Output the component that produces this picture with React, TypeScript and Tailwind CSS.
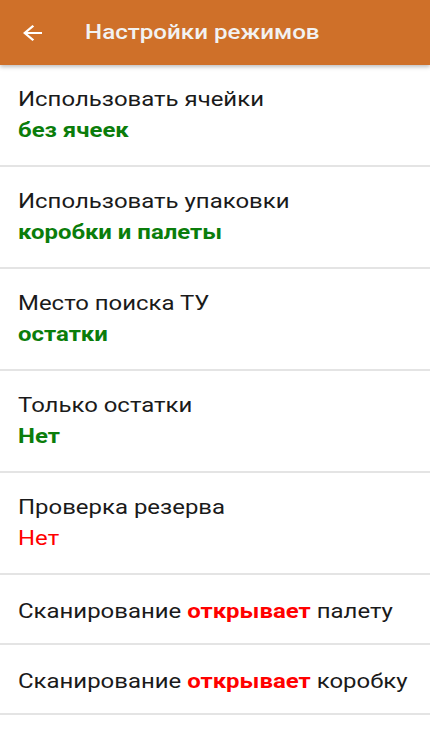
type Row =
  | { kind: "pair"; label: string; value: string; tone: "green" | "red"; bold: boolean }
  | { kind: "scan"; target: string };

const rows: Row[] = [
  { kind: "pair", label: "Использовать ячейки", value: "без ячеек", tone: "green", bold: true },
  { kind: "pair", label: "Использовать упаковки", value: "коробки и палеты", tone: "green", bold: true },
  { kind: "pair", label: "Место поиска ТУ", value: "остатки", tone: "green", bold: true },
  { kind: "pair", label: "Только остатки", value: "Нет", tone: "green", bold: true },
  { kind: "pair", label: "Проверка резерва", value: "Нет", tone: "red", bold: false },
  { kind: "scan", target: "палету" },
  { kind: "scan", target: "коробку" }
];

// the screenshot's glyphs are a bit wider than Roboto, so text is stretched on x
const wide = "inline-block origin-left scale-x-[1.14] whitespace-nowrap";

export default function App() {
  return (
    <div className="min-h-screen bg-white font-['Roboto',sans-serif] text-[#1a1a1a]">
      <header className="relative z-10 flex h-[65px] items-center bg-[#cf7029] shadow-[0_2px_4px_rgba(0,0,0,0.25)]">
        <button className="flex h-[65px] w-[64px] items-center justify-center text-white" aria-label="Назад">
          <svg viewBox="4 4 16 16" preserveAspectRatio="none" className="h-[16px] w-[19px]" fill="currentColor">
            <path d="M20 11H7.83l5.59-5.59L12 4l-8 8 8 8 1.41-1.41L7.83 13H20v-2z" />
          </svg>
        </button>
        <h1 className="ml-[21px] text-[21px] font-medium text-[#f2f2f2]">
          <span className="inline-block origin-left scale-x-[1.15] whitespace-nowrap">Настройки режимов</span>
        </h1>
      </header>
      <main>
        {rows.map((row, i) => (
          <div key={i} className="border-b-2 border-[#e4e4e4]">
            {row.kind === "pair" ? (
              <div className="h-[100px] px-[18px] pt-[19px] text-[21px] leading-[31px]">
                <p>
                  <span className={wide}>{row.label}</span>
                </p>
                <p
                  className={[
                    row.tone === "green" ? "text-[#0b7d0b]" : "text-[#ff0000]",
                    row.bold ? "font-bold" : ""
                  ].join(" ")}
                >
                  <span className={wide}>{row.value}</span>
                </p>
              </div>
            ) : (
              <div className="h-[68px] px-[18px] pt-[21px] text-[21px] leading-[31px]">
                <p>
                  <span className={wide}>
                    Сканирование <span className="font-bold text-[#ff0000]">открывает</span> {row.target}
                  </span>
                </p>
              </div>
            )}
          </div>
        ))}
      </main>
    </div>
  );
}
